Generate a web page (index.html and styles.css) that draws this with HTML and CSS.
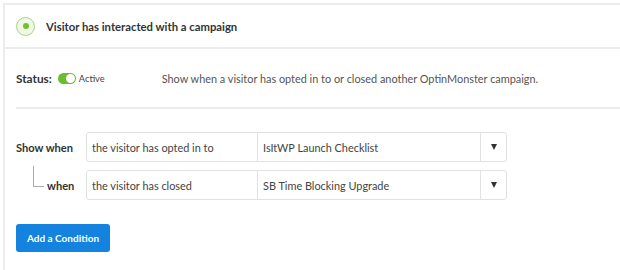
FILE: index.html
```html
<!DOCTYPE html>
<html>
<head>
<meta charset="utf-8">
<link rel="stylesheet" href="styles.css">
</head>
<body>
<div class="panel">
  <div class="header">
    <span class="icon"><span class="dot"></span></span>
    <span class="title">Visitor has interacted with a campaign</span>
  </div>
  <div class="body">
    <div class="status-row">
      <span class="label">Status:</span>
      <span class="toggle"><span class="knob"></span></span>
      <span class="active">Active</span>
      <span class="desc">Show when a visitor has opted in to or closed another OptinMonster campaign.</span>
    </div>
    <div class="divider"></div>
    <div class="rules">
      <div class="rule">
        <span class="rlabel">Show when</span>
        <div class="fields">
          <div class="f1">the visitor has opted in to</div>
          <div class="f2">IsItWP Launch Checklist</div>
          <div class="f3"><span class="caret"></span></div>
        </div>
      </div>
      <div class="rule sub">
        <span class="rlabel"><span class="branch"></span>when</span>
        <div class="fields">
          <div class="f1">the visitor has closed</div>
          <div class="f2">SB Time Blocking Upgrade</div>
          <div class="f3"><span class="caret"></span></div>
        </div>
      </div>
    </div>
    <button class="btn">Add a Condition</button>
  </div>
</div>
</body>
</html>
```
FILE: styles.css
```css
html, body { margin: 0; padding: 0; background: #fff; }
body {
  font-family: Lato, "Liberation Sans", Arial, sans-serif;
  color: #333;
  width: 620px;
  height: 270px;
  overflow: hidden;
}
.panel {
  margin: 3px 0 0 3px;
  border-top: 2px solid #ececec;
  border-left: 2px solid #ececec;
  height: 265px;
  overflow: hidden;
}
.header {
  display: flex;
  align-items: center;
  height: 42px;
  border-bottom: 2px solid #ececec;
  padding-left: 11px;
}
.icon {
  width: 19px;
  height: 19px;
  border-radius: 50%;
  border: 1.5px solid #a5d87a;
  background: #eef8e4;
  display: flex;
  align-items: center;
  justify-content: center;
  box-sizing: border-box;
}
.dot {
  width: 6px;
  height: 6px;
  border-radius: 50%;
  background: #71c02b;
}
.title {
  margin-left: 11px;
  font-weight: 700;
  font-size: 11.3px;
  color: #333;
}
.body { padding: 0 0 0 11px; }
.status-row {
  display: flex;
  align-items: center;
  height: 58px;
}
.label { font-weight: 700; font-size: 11.8px; color: #333; }
.toggle {
  margin-left: 6px;
  width: 18px;
  height: 11px;
  border-radius: 6px;
  background: #6abd30;
  position: relative;
}
.knob {
  position: absolute;
  right: 1px;
  top: 1px;
  width: 9px;
  height: 9px;
  border-radius: 50%;
  background: #fff;
}
.active { margin-left: 3px; font-size: 9.3px; color: #444; }
.desc { margin-left: 57px; font-size: 10.9px; color: #555; }
.divider { height: 2px; background: #ececec; }
.rules { padding-top: 23px; }
.rule {
  display: flex;
  align-items: center;
  margin-bottom: 8px;
}
.rlabel {
  width: 70px;
  font-weight: 700;
  font-size: 11.1px;
  color: #333;
  position: relative;
}
.sub .rlabel { padding-left: 31px; width: 39px; }
.branch {
  position: absolute;
  left: 17px;
  top: -13px;
  width: 10px;
  height: 20px;
  border-left: 1px solid #aaa;
  border-bottom: 1px solid #aaa;
}
.fields {
  display: flex;
  height: 30px;
  width: 421px;
  border: 1px solid #e2e2e2;
  border-radius: 3px;
  box-sizing: border-box;
  font-size: 10.9px;
  color: #444;
}
.fields > div { display: flex; align-items: center; }
.f1 { width: 171px; padding-left: 5px; box-sizing: border-box; border-right: 1px solid #e2e2e2; }
.f2 { width: 223px; padding-left: 5px; box-sizing: border-box; border-right: 1px solid #e2e2e2; }
.f3 { flex: 1; justify-content: center; }
.caret {
  width: 0; height: 0;
  border-left: 3.5px solid transparent;
  border-right: 3.5px solid transparent;
  border-top: 6px solid #333;
}
.btn {
  margin-top: 16px;
  background: #1483e0;
  color: #fff;
  border: 0;
  border-radius: 3px;
  width: 94px;
  height: 28px;
  font-family: inherit;
  font-weight: 700;
  font-size: 10px;
  padding: 0;
}
```
